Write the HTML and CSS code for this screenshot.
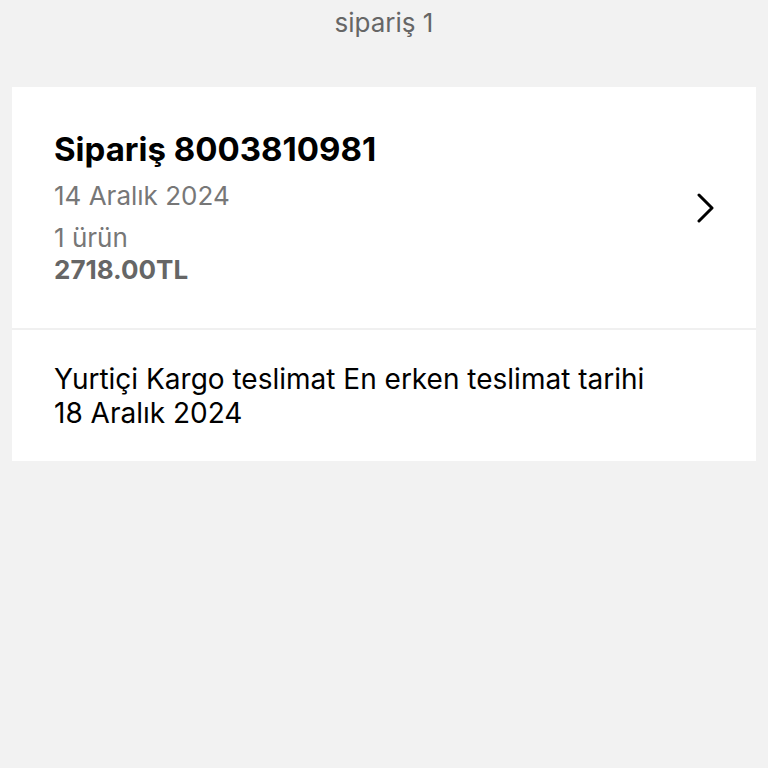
FILE: index.html
```html
<!DOCTYPE html>
<html lang="tr">

<head>
	<meta charset="utf-8">
	<title>sipariş 1</title>
	<link rel="stylesheet" href="styles.css">
</head>

<body>
	<header class="topbar">sipariş 1</header>

	<div class="card">
		<div class="order">
			<div class="order-info">
				<h2 class="order-title">Sipariş 8003810981</h2>
				<p class="order-date">14 Aralık 2024</p>
				<p class="order-count">1 ürün</p>
				<p class="order-total">2718.00TL</p>
			</div>
			<svg class="chevron" width="20" height="30" viewBox="0 0 20 30">
				<path d="M3 2 L16 15 L3 28" fill="none" stroke="#000" stroke-width="3" stroke-linecap="round" stroke-linejoin="round"/>
			</svg>
		</div>
		<div class="delivery">
			<p>Yurtiçi Kargo teslimat En erken teslimat tarihi<br>18 Aralık 2024</p>
		</div>
	</div>
</body>

</html>
```

FILE: styles.css
```css
body {
	margin: 0;
	background: #f2f2f2;
	font-family: Inter, "Noto Sans", sans-serif;
	color: #000;
}

.topbar {
	height: 48px;
	line-height: 46px;
	text-align: center;
	font-size: 26px;
	color: #666;
}

.card {
	margin: 39px 12px 0;
	background: #fff;
}

.order {
	display: flex;
	align-items: center;
	padding: 0 40px 0 42px;
	height: 241px;
	border-bottom: 2px solid #f0f0f0;
}

.order-info {
	flex: 1;
}

.order-title {
	margin: 0;
	font-size: 33px;
	line-height: 40px;
	font-weight: 700;
}

.order-date,
.order-count,
.order-total {
	margin: 0;
	font-size: 26px;
	color: #777;
}

.order-date {
	margin: 10px 0 9px;
	line-height: 34px;
}

.order-count {
	line-height: 32px;
}

.order-total {
	font-weight: 700;
	color: #666;
	line-height: 32px;
}

.chevron {
	display: block;
}

.delivery {
	height: 131px;
	display: flex;
	align-items: center;
	padding: 0 42px;
}

.delivery p {
	margin: 0;
	font-size: 28px;
	line-height: 34px;
}
```
